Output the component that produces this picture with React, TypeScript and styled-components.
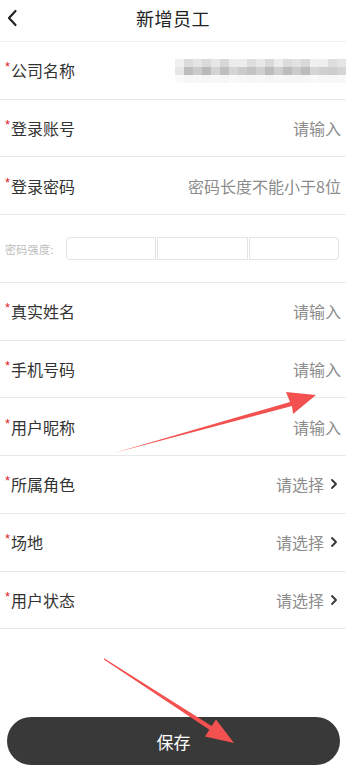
import React from 'react';
import styled, { createGlobalStyle } from 'styled-components';

const GlobalStyle = createGlobalStyle`
  html, body {
    margin: 0;
    padding: 0;
    background: #fff;
  }
  body {
    font-family: "Noto Sans CJK SC", "Noto Sans", sans-serif;
    color: #333;
  }
`;

type Field = { label: string; value: string; select?: boolean };

const topFields: Field[] = [
  { label: '登录账号', value: '请输入' },
  { label: '登录密码', value: '密码长度不能小于8位' },
];

const bottomFields: Field[] = [
  { label: '真实姓名', value: '请输入' },
  { label: '手机号码', value: '请输入' },
  { label: '用户昵称', value: '请输入' },
  { label: '所属角色', value: '请选择', select: true },
  { label: '场地', value: '请选择', select: true },
  { label: '用户状态', value: '请选择', select: true },
];

// mosaic over the company name, rows of gray tiles
const mosaic = [
  ['#f0f0f0', '#dcdcdc', '#e4e4e4', '#dadada', '#e6e6e6', '#d8d8d8', '#ececec', '#ededed', '#dedede', '#e8e8e8', '#d9d9d9', '#ececec', '#dbdbdb', '#e2e2e2', '#d9d9d9', '#f0f0f0', '#eeeeee', '#dedede', '#e5e5e5'],
  ['#e6e6e6', '#bdbdbd', '#cbcbcb', '#b9b9b9', '#d3d3d3', '#bebebe', '#d5d5d5', '#cbcbcb', '#c3c3c3', '#cfcfcf', '#bcbcbc', '#cecece', '#bcbcbc', '#cbcbcb', '#bcbcbc', '#d6d6d6', '#d0d0d0', '#cdcdcd', '#d5d5d5'],
  ['#fafafa', '#f6f6f6', '#f7f7f7', '#f6f6f6', '#f8f8f8', '#f6f6f6', '#f9f9f9', '#f7f7f7', '#f6f6f6', '#f8f8f8', '#f5f5f5', '#f7f7f7', '#f6f6f6', '#f6f6f6', '#f6f6f6', '#f9f9f9', '#f8f8f8', '#f7f7f7', '#f8f8f8'],
];

const App = () => {
  return (
    <>
      <GlobalStyle />
      <Page>
        <Header>
          <BackButton>
            <svg width="12" height="18" viewBox="0 0 12 18">
              <path d="M9.5 2 L3 9 L9.5 16" fill="none" stroke="#222" strokeWidth="2.2" strokeLinecap="round" strokeLinejoin="round" />
            </svg>
          </BackButton>
          <Title>新增员工</Title>
        </Header>

        <Row>
          <Label><Star>*</Star>公司名称</Label>
          <Mosaic>
            {mosaic.map((line, i) => (
              <MosaicLine key={i}>
                {line.map((c, j) => <Tile key={j} style={{ background: c }} />)}
              </MosaicLine>
            ))}
          </Mosaic>
        </Row>

        {topFields.map((f) => (
          <Row key={f.label}>
            <Label><Star>*</Star>{f.label}</Label>
            <Value>{f.value}</Value>
          </Row>
        ))}

        <StrengthRow>
          <StrengthLabel>密码强度:</StrengthLabel>
          <StrengthBar>
            <StrengthCell />
            <StrengthCell />
            <StrengthCell />
          </StrengthBar>
        </StrengthRow>

        {bottomFields.map((f) => (
          <Row key={f.label}>
            <Label><Star>*</Star>{f.label}</Label>
            <Value>
              {f.value}
              {f.select && (
                <svg width="8" height="12" viewBox="0 0 8 12">
                  <path d="M2 2 L6 6 L2 10" fill="none" stroke="#333" strokeWidth="1.8" strokeLinecap="round" strokeLinejoin="round" />
                </svg>
              )}
            </Value>
          </Row>
        ))}

        <Spacer />
        <Footer>
          <SaveButton>保存</SaveButton>
        </Footer>

        {/* red annotation arrows drawn over the screenshot */}
        <Arrows width="346" height="768" viewBox="0 0 346 768">
          <path d="M114 453 L290 402 L286 392 L316 395 L293 414 L292 406 Z" fill="#f2514f" />
          <path d="M104.5 658.5 L211.6 726 L216 719.5 L234 743 L205 736.5 L209.4 729.8 L103.8 659.6 Z" fill="#f2514f" />
        </Arrows>
      </Page>
    </>
  );
};

export default App;

const Page = styled.div`
  position: relative;
  width: 346px;
  height: 768px;
  display: flex;
  flex-direction: column;
  overflow: hidden;
  background: #fff;
`;

const Header = styled.div`
  position: relative;
  height: 42px;
  flex-shrink: 0;
  display: flex;
  align-items: center;
  justify-content: center;
  border-bottom: 1px solid #f0f0f0;
  box-sizing: border-box;
`;

const BackButton = styled.div`
  position: absolute;
  left: 6px;
  top: 9px;
  display: flex;
`;

const Title = styled.div`
  font-size: 18px;
  color: #222;
  margin-top: -6px;
  letter-spacing: 0.5px;
`;

const Row = styled.div`
  height: 57.7px;
  flex-shrink: 0;
  box-sizing: border-box;
  display: flex;
  align-items: center;
  justify-content: space-between;
  padding: 0 5px 0 5px;
  border-bottom: 1px solid #e8e8e8;
`;

const Label = styled.div`
  font-size: 16px;
  color: #333;
  display: flex;
  align-items: flex-start;
  line-height: 20px;
`;

const Star = styled.span`
  color: #e0222a;
  font-size: 13px;
  line-height: 14px;
  margin-right: 1px;
  font-family: "Liberation Sans", sans-serif;
`;

const Value = styled.div`
  font-size: 16px;
  color: #8c8c8c;
  display: flex;
  align-items: center;
  gap: 6px;
  svg {
    margin-right: 3px;
  }
`;

const Mosaic = styled.div`
  display: flex;
  flex-direction: column;
  margin-right: -5px;
  margin-top: 2px;
`;

const MosaicLine = styled.div`
  display: flex;
`;

const Tile = styled.div`
  width: 9px;
  height: 8px;
`;

const StrengthRow = styled.div`
  height: 68px;
  flex-shrink: 0;
  box-sizing: border-box;
  display: flex;
  align-items: center;
  padding: 0 7px 0 5px;
  border-bottom: 1px solid #e8e8e8;
`;

const StrengthLabel = styled.div`
  font-size: 11px;
  color: #bdbdbd;
  width: 61px;
  flex-shrink: 0;
  letter-spacing: 0.3px;
`;

const StrengthBar = styled.div`
  flex: 1;
  display: flex;
  gap: 1px;
  height: 23px;
`;

const StrengthCell = styled.div`
  flex: 1;
  border: 1px solid #e4e4e4;
  box-sizing: border-box;
  &:first-child {
    border-radius: 4px 0 0 4px;
  }
  &:last-child {
    border-radius: 0 4px 4px 0;
  }
`;

const Spacer = styled.div`
  flex: 1;
`;

const Footer = styled.div`
  padding: 0 6px 3px 7px;
`;

const SaveButton = styled.div`
  height: 48px;
  border-radius: 24px;
  background: #393939;
  color: #fff;
  font-size: 17px;
  display: flex;
  align-items: center;
  justify-content: center;
`;

const Arrows = styled.svg`
  position: absolute;
  left: 0;
  top: 0;
  pointer-events: none;
`;
